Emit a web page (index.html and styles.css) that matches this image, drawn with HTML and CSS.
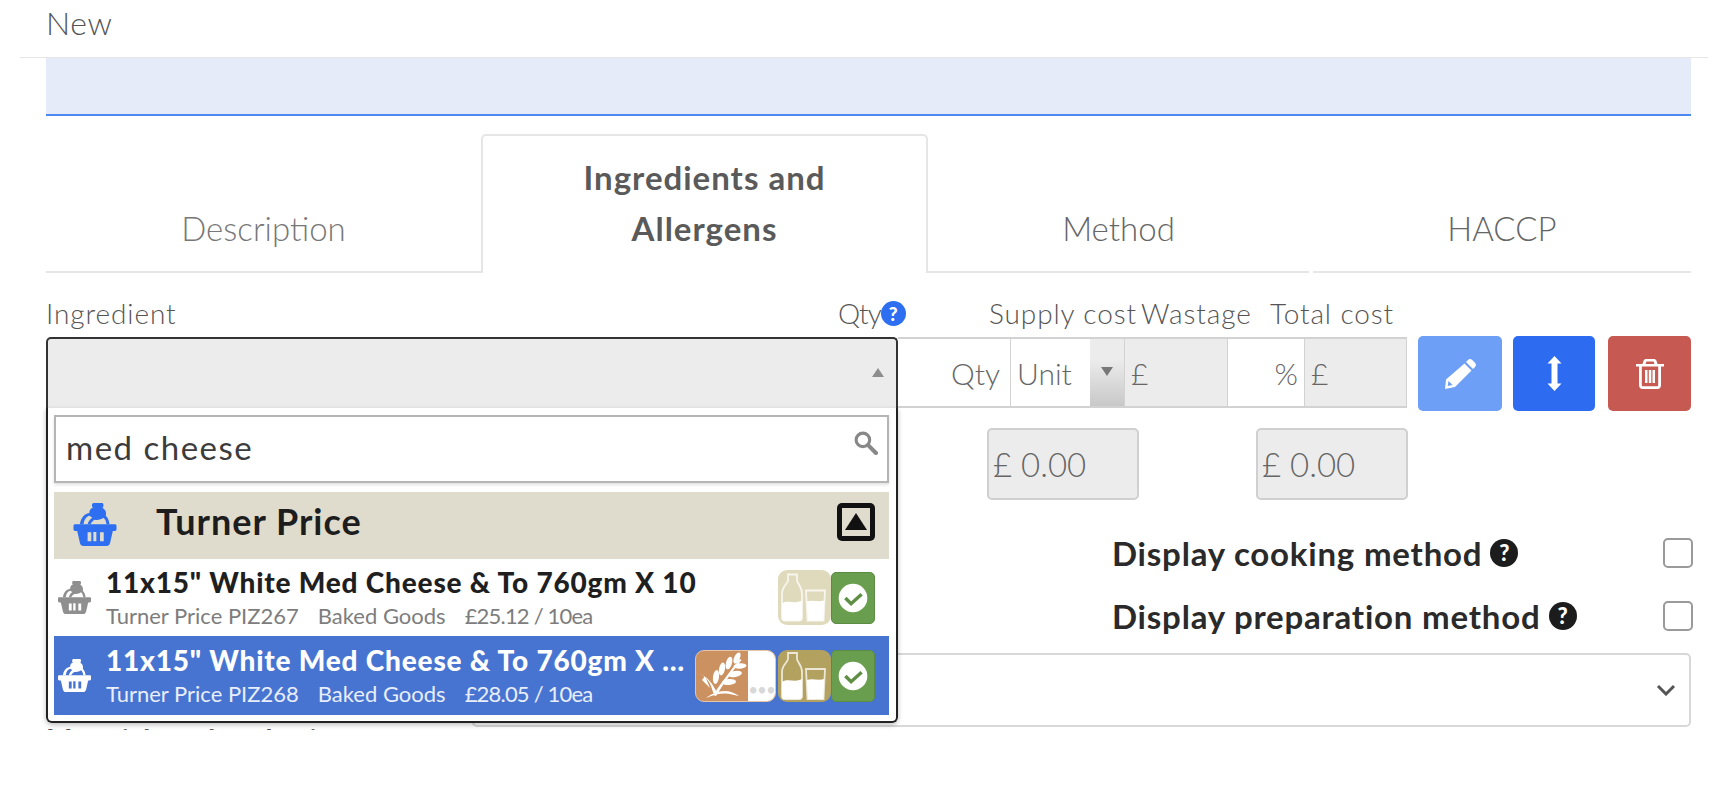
FILE: index.html
```html
<!DOCTYPE html>
<html lang="en">
<head>
<meta charset="utf-8">
<title>New recipe</title>
<link rel="stylesheet" href="styles.css">
</head>
<body>
<svg class="defs" width="0" height="0" aria-hidden="true">
  <symbol id="basket" viewBox="0 0 128 128">
    <path fill="currentColor" fill-rule="evenodd" d="M62 0h22c3 0 5 2 5 5v5c0 2-1 4-3 5 7 3 11 9 11 17 0 2-.3 4-1 6 6 5 10 14 11 25h-9c-1-9-4-15-9-19-6 5-16 8-26 6-5 3-10 8-12 13H42c2-8 7-15 14-20-3-1-6-3-8-5-10 2-16 11-18 25H19C22 45 31 33 47 30c0-9 5-14 11-16-2-1-3-3-3-5V5c0-3 3-5 7-5z"/>
    <path fill="currentColor" fill-rule="evenodd" d="M5 63h118c3 0 5 2 5 5v10c0 3-2 5-5 5h-6l-8 35c-1.500 6-5 10-11 10H30c-6 0-9.500-4-11-10l-8-35H5c-3 0-5-2-5-5V68c0-3 2-5 5-5zm37 24v27h11V87zm26-1h-9v28h9zm11 1v27h11V87z"/>
  </symbol>
  <symbol id="milk" viewBox="0 0 53 52">
    <path fill="none" stroke="#fff" stroke-opacity=".75" stroke-width="1.800" d="M10 3h9v6c0 3 5 6 5 13v24c0 2-1 3-3 3H7c-2 0-3-1-3-3V22c0-7 6-10 6-13z"/>
    <path fill="#fff" d="M4 32c6-4 13 1 20-3v17c0 2-1 3-3 3H7c-2 0-3-1-3-3z"/>
    <path fill="none" stroke="#fff" stroke-opacity=".75" stroke-width="1.800" d="M28 19h19l-1.500 30H29.500z"/>
    <path fill="#fff" d="M28.800 30c6-2 11 1 17.500-1l-1 20H30z"/>
  </symbol>
  <symbol id="ok" viewBox="0 0 44 52">
    <circle cx="22" cy="26" r="15" fill="#fff"/>
    <path fill="none" stroke="#5f8f45" stroke-width="3.600" d="M14 26l6 6 11-10"/>
  </symbol>
</svg>

<main class="page">
  <header class="page-head">New</header>
  <div class="content">
    <div class="banner"></div>

    <nav class="tabs">
      <div class="tab tab-desc">Description</div>
      <div class="tab tab-active">Ingredients and<br>Allergens</div>
      <div class="tab tab-method">Method</div>
      <div class="tab tab-haccp">HACCP</div>
    </nav>

    <div class="labels">
      <span class="lab lab-ing">Ingredient</span>
      <span class="lab lab-qty">Qty<span class="help help-blue">?</span></span>
      <span class="lab lab-sup">Supply cost</span>
      <span class="lab lab-was">Wastage</span>
      <span class="lab lab-tot">Total cost</span>
    </div>

    <div class="entry">
      <div class="combo">
        <div class="combo-head"><span class="arrow-up"></span></div>
        <div class="menu">
          <div class="search">
            <span>med cheese</span>
            <svg class="search-ic" viewBox="0 0 24 24"><circle cx="9.500" cy="9.500" r="6.500" fill="none" stroke="currentColor" stroke-width="3"/><path d="M14.500 14.500L22 22" stroke="currentColor" stroke-width="4" stroke-linecap="round"/></svg>
          </div>
          <div class="group">
            <svg class="group-ic"><use href="#basket"/></svg>
            <span class="group-name">Turner Price</span>
            <span class="collapse"><span class="collapse-tri"></span></span>
          </div>
          <div class="item">
            <svg class="item-ic"><use href="#basket"/></svg>
            <div class="item-text">
              <div class="item-name">11x15" White Med Cheese &amp; To 760gm X 10</div>
              <div class="item-sub"><span>Turner Price PIZ267</span><span>Baked Goods</span><span class="price">£25.12 / 10ea</span></div>
            </div>
            <div class="badges">
              <span class="badge b-milk-pale"><svg><use href="#milk"/></svg></span>
              <span class="badge b-ok"><svg><use href="#ok"/></svg></span>
            </div>
          </div>
          <div class="item item-sel">
            <svg class="item-ic"><use href="#basket"/></svg>
            <div class="item-text">
              <div class="item-name">11x15" White Med Cheese &amp; To 760gm X 10</div>
              <div class="item-sub"><span>Turner Price PIZ268</span><span>Baked Goods</span><span class="price">£28.05 / 10ea</span></div>
            </div>
            <div class="badges">
              <span class="badge b-wheat">
                <svg class="wheat" viewBox="0 0 52 50">
                  <g fill="#fff">
                    <path d="M17 44C26 31 34 20 44 8l1.500 1C36 21 28 32 20 45z"/>
                    <ellipse cx="41" cy="7" rx="2.800" ry="6" transform="rotate(25 41 7)"/>
                    <ellipse cx="33" cy="12" rx="3" ry="6.500" transform="rotate(15 33 12)"/>
                    <ellipse cx="44" cy="15" rx="6.500" ry="2.800" transform="rotate(-5 44 15)"/>
                    <ellipse cx="26" cy="18" rx="3" ry="6.500" transform="rotate(12 26 18)"/>
                    <ellipse cx="39" cy="23" rx="7" ry="3" transform="rotate(-10 39 23)"/>
                    <ellipse cx="20" cy="26" rx="3" ry="7" transform="rotate(8 20 26)"/>
                    <ellipse cx="33" cy="31" rx="7" ry="3" transform="rotate(-5 33 31)"/>
                    <path d="M3 22c6 3 10 8 12 13 1 3 2 6 3 9l3-2c-4-9-9-16-18-20zM9 25l5 12-8-8zM10 47c5-4 12-7 19-7 5 0 10 2 14 5-5-1-9-2.500-14-2.500-7 0-13 2-19 4.500z"/>
                  </g>
                </svg>
                <span class="wheat-blank"><span class="dots">•••</span></span>
              </span>
              <span class="badge b-milk"><svg><use href="#milk"/></svg></span>
              <span class="badge b-ok"><svg><use href="#ok"/></svg></span>
            </div>
          </div>
        </div>
      </div>
      <div class="field f-qty">Qty</div>
      <div class="field f-unit"><span>Unit</span><span class="unit-arrow"><i></i></span></div>
      <div class="field f-cost ro">£</div>
      <div class="field f-pct">%</div>
      <div class="field f-total ro">£</div>
      <div class="btns">
        <button class="btn btn-edit" aria-label="Edit"><svg viewBox="0 0 32 30"><path fill="#fff" fill-rule="evenodd" d="M22 3l2-2c1.200-1.200 3-1.200 4.200 0l2.800 2.800c1.200 1.200 1.200 3 0 4.200l-2 2zM20.500 4.500L27.500 11.500 11 28 1 30l1-9.500zM4.500 22l-.8 5 5-.9z"/></svg></button>
        <button class="btn btn-move" aria-label="Resize"><svg viewBox="0 0 15 35"><path fill="#fff" d="M7.500 0l7 7.500h-4v20h4l-7 7.500-7-7.500h4v-20h-4z"/></svg></button>
        <button class="btn btn-del" aria-label="Delete"><svg viewBox="0 0 28 30"><path fill="#fff" fill-rule="evenodd" d="M10 0h8c1 0 2 .6 2.400 1.600L21.500 5H28v2.500h-3V26c0 2.500-1.500 4-3.500 4h-15C4.500 30 3 28.500 3 26V7.500H0V5h6.500l1.100-3.400C8 .6 9 0 10 0zm.5 2.500L9.500 5h9l-1-2.500zM5.800 7.500V26c0 .8.400 1.300 1 1.300h14.400c.6 0 1-.5 1-1.300V7.500zM9 11h2.500v13H9zm3.800 0h2.500v13h-2.500zm3.700 0H19v13h-2.500z"/></svg></button>
      </div>
    </div>

    <div class="totals">
      <div class="field-box">£ 0.00</div>
      <div class="field-box">£ 0.00</div>
    </div>

    <div class="opt opt-1"><span class="opt-label">Display cooking method</span><span class="help help-dark">?</span><span class="check"></span></div>
    <div class="opt opt-2"><span class="opt-label">Display preparation method</span><span class="help help-dark">?</span><span class="check"></span></div>

    <div class="select"><svg viewBox="0 0 20 12"><path fill="none" stroke="#555" stroke-width="3" d="M2 2l8 8 8-8"/></svg></div>
    <div class="below">Materials and packaging</div>
  </div>
</main>
</body>
</html>
```
FILE: styles.css
```css
* { box-sizing: border-box; }
html, body { margin: 0; padding: 0; background: #fff; }
body { font-family: Lato, "Open Sans", sans-serif; color: #6e6e6e; height: 792px; overflow: hidden; }
.defs { position: absolute; }
.page { height: 730px; overflow: hidden; }

.page-head { margin: 0 14px 0 20px; padding-left: 26px; height: 58px; border-bottom: 1px solid #e6e6e6; font-size: 32px; font-weight: 300; letter-spacing: .6px; line-height: 46px; color: #555; }
.content { margin: 0 31px 0 46px; position: relative; }
.banner { height: 58px; background: #e6ebfa; border-bottom: 2px solid #4d88f2; }

.tabs { display: flex; height: 138px; margin-top: 19px; }
.tab { display: flex; align-items: flex-end; justify-content: center; text-align: center; font-size: 33px; font-weight: 300; line-height: 51px; padding-bottom: 17px; border-bottom: 2px solid #e6e6e6; color: #777; }
.tab-desc { width: 435px; }
.tab-active { width: 447px; margin-top: -1px; border: 2px solid #e6e6e6; border-bottom: 0; border-radius: 5px 5px 0 0; color: #5a5a5a; font-size: 33px; font-weight: 700; letter-spacing: 1px; padding-bottom: 19px; }
.tab-method { width: 381px; color: #666; }
.tab-haccp { flex: 1; color: #666; margin-left: 4px; }

.labels { display: flex; height: 64px; padding-top: 16px; align-items: center; font-size: 28px; font-weight: 300; letter-spacing: .9px; white-space: nowrap; color: #555; }
.lab-ing { width: 792px; }
.lab-qty { width: 151px; display: flex; align-items: center; letter-spacing: -1px; }
.lab-sup { width: 152px; }
.lab-was { width: 129px; }
.help { display: inline-flex; align-items: center; justify-content: center; width: 25px; height: 25px; border-radius: 50%; color: #fff; font-weight: 900; font-size: 19px; line-height: 1; letter-spacing: 0; }
.help-blue { background: #2d6ff0; }
.help-dark { background: #1c1c1c; width: 28px; height: 28px; font-size: 22px; }

.entry { display: flex; height: 71px; }
.combo { width: 852px; position: relative; }
.combo-head { height: 71px; background: #ececec; border: 2px solid #333; border-bottom: 0; border-radius: 5px 5px 0 0; position: relative; }
.arrow-up { position: absolute; right: 12px; top: 29px; border: 6px solid transparent; border-top: 0; border-bottom: 9px solid #8e8e8e; }

.menu { position: absolute; left: 0; right: 0; top: 71px; height: 315px; background: #fff; border: 2px solid #222; border-top: 0; border-radius: 0 0 6px 6px; box-shadow: 0 2px 5px rgba(0,0,0,.25); padding: 7px 7px 0 6px; z-index: 5; }
.search { height: 68px; border: 2px solid #b5b5b5; box-shadow: 0 2px 3px rgba(0,0,0,.12); display: flex; align-items: center; justify-content: space-between; padding: 0 9px 4px 10px; font-size: 33px; color: #3c3c3c; letter-spacing: 1.500px; }
.search-ic { width: 25px; height: 25px; color: #888; margin-top: -10px; }
.group { height: 67px; margin-top: 9px; background: #e0dccd; display: flex; align-items: center; padding: 0 14px 0 19px; }
.group-ic { width: 44px; height: 43px; color: #2d6ff0; flex: none; margin-top: -2px; }
.group-name { font-size: 36px; font-weight: 700; color: #1d1d1d; margin-left: 39px; letter-spacing: 1px; flex: 1; margin-top: -10px; }
.collapse { width: 38px; height: 38px; background: #111; border-radius: 5px; display: flex; align-items: center; justify-content: center; margin-top: -7px; }
.collapse span { width: 28px; height: 28px; background: #e0dccd; display: block; position: relative; }
.collapse-tri::after { content: ""; position: absolute; left: 3px; top: 5px; border: 11px solid transparent; border-top: 0; border-bottom: 17px solid #111; }

.item { height: 77px; display: flex; align-items: center; padding: 0 14px 0 4px; }
.item-ic { width: 33px; height: 33px; color: #8f8f8f; flex: none; }
.item-text { margin-left: 15px; flex: 1; min-width: 0; }
.item-name { font-size: 28px; font-weight: 900; letter-spacing: .8px; color: #1f1f1f; white-space: nowrap; overflow: hidden; text-overflow: ellipsis; line-height: 34px; }
.item-sub { font-size: 22px; color: #7d7d7d; white-space: nowrap; line-height: 28px; margin-top: 3px; display: flex; gap: 19px; }
.price { letter-spacing: -.8px; }
.item-sel { background: #4874d1; height: 79px; padding-right: 14px; }
.item-sel .item-ic { color: #fff; }
.item-sel .item-name { color: #fff; }
.item-sel .item-sub { color: #e8eefb; }

.badges { display: flex; align-items: center; margin-left: 6px; flex: none; }
.badge { display: block; height: 52px; border-radius: 7px; }
.badge svg { display: block; width: 100%; height: 100%; }
.b-milk-pale { width: 53px; height: 55px; background: #e0dabc; border-radius: 9px; }
.b-milk { width: 53px; background: #b3a15f; border-radius: 9px; }
.b-ok { width: 44px; background: #6a9e4f; border: 1px solid #5c8c44; border-radius: 5px; }
.b-wheat { width: 81px; background: #cc9160; border: 1px solid #e6c5a8; border-radius: 9px; display: flex; overflow: hidden; margin-right: 2px; }
.badge .wheat { width: 52px; height: 100%; flex: none; }
.wheat-blank { flex: 1; background: #fff; display: flex; align-items: flex-end; justify-content: center; }
.dots { color: #d8d8d8; font-size: 17px; line-height: 16px; letter-spacing: -1px; margin-bottom: 3px; }

.field { height: 71px; background: #fff; border: 1px solid #d2d2d2; border-left: 0; border-top-width: 2px; border-bottom-width: 2px; display: flex; align-items: center; font-size: 30px; font-weight: 300; color: #666; padding: 0 6px; }
.ro { background: #ececec; }
.f-qty { width: 113px; justify-content: flex-end; padding-right: 10px; }
.f-unit { width: 114px; padding-right: 0; justify-content: space-between; }
.unit-arrow { width: 34px; align-self: stretch; background: linear-gradient(#ececec 30%, #c8c8c8); position: relative; }
.unit-arrow i { position: absolute; left: 11px; top: 28px; border: 6px solid transparent; border-bottom: 0; border-top: 9px solid #777; }
.f-cost { width: 103px; }
.f-pct { width: 77px; justify-content: flex-end; }
.f-total { width: 102px; }

.btns { display: flex; margin-left: 11px; margin-top: -1px; }
.btn { height: 75px; border: 0; border-radius: 5px; display: flex; align-items: center; justify-content: center; padding: 0; }
.btn-edit { background: #6c9ff5; width: 84px; }
.btn-edit svg { width: 32px; height: 30px; }
.btn-move { background: #2d6cf0; width: 82px; margin-left: 11px; }
.btn-move svg { width: 15px; height: 35px; }
.btn-del { background: #c65a52; width: 83px; margin-left: 13px; }
.btn-del svg { width: 28px; height: 30px; }

.totals { display: flex; margin: 20px 0 0 941px; gap: 117px; }
.field-box { width: 152px; height: 72px; background: #ececec; border: 2px solid #d0d0d0; border-radius: 5px; display: flex; align-items: center; font-size: 33px; font-weight: 300; color: #666; padding-left: 4px; }

.opt { display: flex; align-items: center; height: 40px; margin-left: 1066px; font-size: 33px; font-weight: 700; letter-spacing: .8px; color: #2a2a2a; white-space: nowrap; }
.opt-1 { margin-top: 33px; }
.opt-2 { margin-top: 23px; }
.opt .help { margin-left: 8px; }
.check { width: 30px; height: 30px; border: 2px solid #9a9a9a; border-radius: 5px; margin-left: auto; margin-right: -2px; }

.select { margin: 17px 0 0 426px; height: 74px; border: 2px solid #d8d8d8; border-radius: 5px; display: flex; align-items: center; justify-content: flex-end; padding-right: 13px; }
.select svg { width: 20px; height: 12px; }
.below { font-size: 28px; color: #555; margin-top: -5px; font-weight: 700; line-height: 34px; }
```
